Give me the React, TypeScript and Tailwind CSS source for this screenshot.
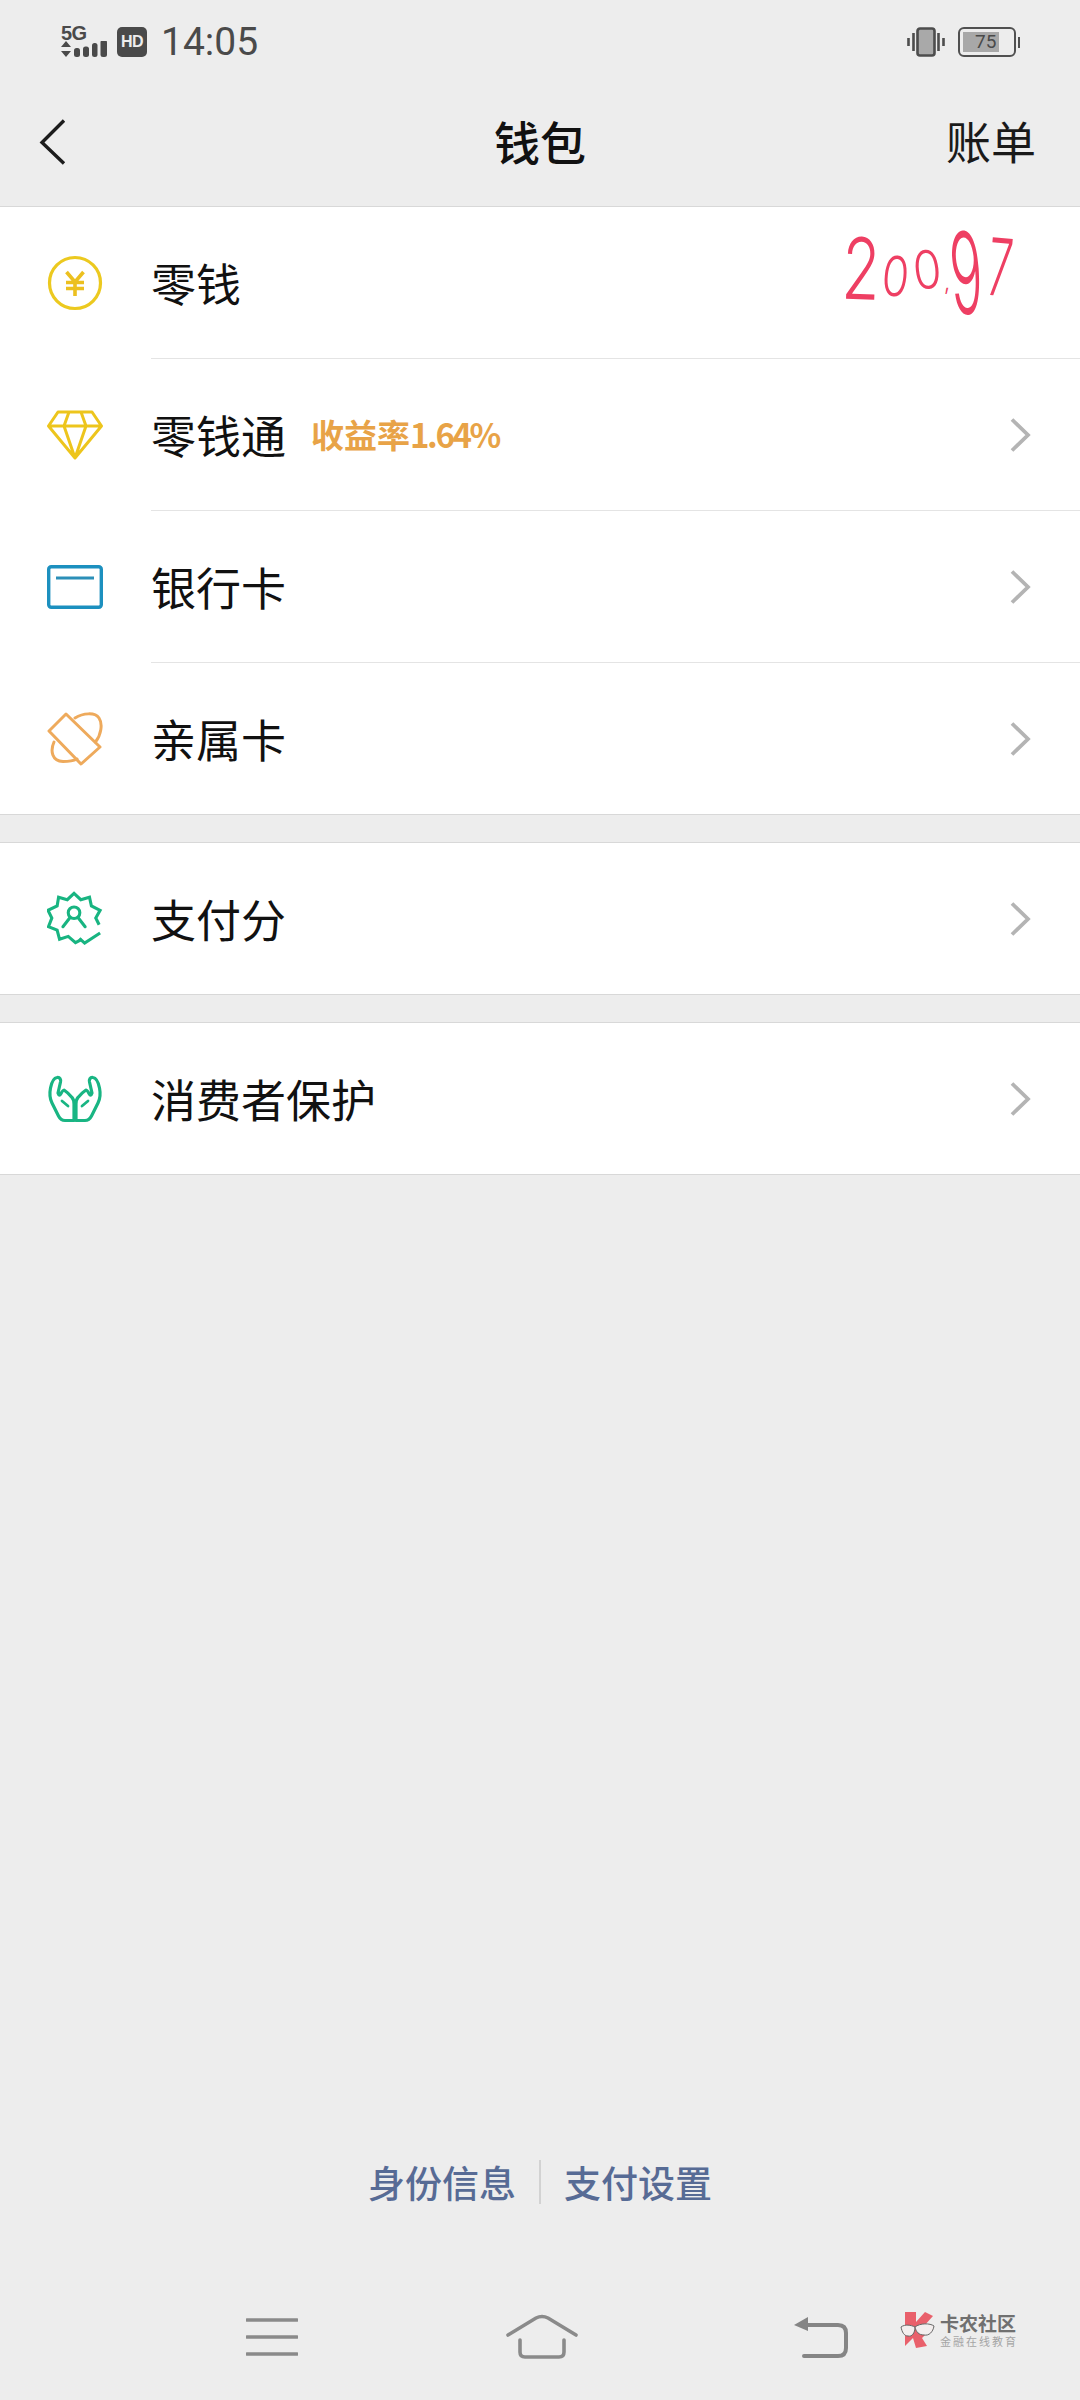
import React from "react";

const CJK = "font-['Noto_Sans_CJK_SC','Noto_Sans',sans-serif]";

function Chevron() {
  return (
    <svg width="24" height="36" viewBox="0 0 24 36" className="shrink-0" fill="none">
      <path d="M3 2.5 L19 18 L3 33.5" stroke="#b4b4b4" strokeWidth="3.8" />
    </svg>
  );
}

function Coin() {
  return (
    <svg width="56" height="56" viewBox="0 0 56 56" fill="none">
      <circle cx="28" cy="28" r="25.5" stroke="#ecc91f" strokeWidth="3.2" />
      <path d="M19.5 17 L28 27 L36.5 17 M19 27.5 H37 M19 33.5 H37 M28 27 V41" stroke="#ecc01f" strokeWidth="3.6" />
    </svg>
  );
}

function Diamond() {
  return (
    <svg width="56" height="50" viewBox="0 0 56 50" fill="none">
      <path d="M11 2 H45 L54.5 16 L28 48 L1.5 16 Z M1.5 16 H54.5 M22 2 L17 16 L28 48 L39 16 L34 2" stroke="#edc51c" strokeWidth="3" strokeLinejoin="round" />
    </svg>
  );
}

function BankCard() {
  return (
    <svg width="56" height="44" viewBox="0 0 56 44" fill="none">
      <rect x="1.7" y="1.7" width="52.6" height="40.6" rx="2.5" stroke="#1c90bf" strokeWidth="3.4" />
      <path d="M9 13 H47" stroke="#2b8fb8" strokeWidth="3.2" />
    </svg>
  );
}

function FamilyCard() {
  return (
    <svg width="56" height="56" viewBox="0 0 56 56" fill="none">
      <path d="M19 3 L53 36 L34 53 L2 20 Z" stroke="#eeaa5c" strokeWidth="3" strokeLinejoin="round" />
      <path d="M28 7 C36 2 48 1 52 7 C56 13 54 24 48.5 31 M7 31 C3 40 5 50 16 50.5 C21 50.5 26 50 30 48" stroke="#eeaa5c" strokeWidth="3" strokeLinecap="round" />
    </svg>
  );
}

function ScoreBadge() {
  return (
    <svg width="58" height="56" viewBox="0 0 58 56" fill="none">
      <path d="M36 49 L29.5 52.5 L22 46 L13 49 L10.5 39.5 L1.5 36 L5 27 L1 19 L10.5 14.5 L12 5.5 L21 8 L28 1.5 L35 8 L44 5.5 L46 14.5 L55 19 L50.5 27 L54 34" stroke="#18b481" strokeWidth="3.2" strokeLinejoin="miter" />
      <path d="M33.5 48 L39 53 L55 42.5" stroke="#18b481" strokeWidth="3.2" />
      <circle cx="28" cy="21.5" r="6" stroke="#18b481" strokeWidth="3.2" />
      <path d="M23.5 27 L16.5 36 M32.5 27 L39.5 36" stroke="#18b481" strokeWidth="3.2" strokeLinecap="round" />
    </svg>
  );
}

function Hands() {
  return (
    <svg width="56" height="48" viewBox="0 0 56 48" fill="none">
      <path d="M27 45.5 H18 C15 45.5 13 44 11.5 41 L5 28 C3 24 2.5 18 3.5 13 C4.5 8 6.5 3 10 2.5 C13 2 14 4.5 13.5 7 L11 18 L12 20 C13.5 21 15 15 17 15 C20 17 23 20 25 22.5 C26.5 24 27 26 27 29 Z" stroke="#19b583" strokeWidth="3.2" strokeLinejoin="round" />
      <path d="M29 45.5 H38 C41 45.5 43 44 44.5 41 L51 28 C53 24 53.5 18 52.5 13 C51.5 8 49.5 3 46 2.5 C43 2 42 4.5 42.5 7 L45 18 L44 20 C42.5 21 41 15 39 15 C36 17 33 20 31 22.5 C29.5 24 29 26 29 29 Z" stroke="#19b583" strokeWidth="3.2" strokeLinejoin="round" />
      <path d="M15 26 L21 31 M41 26 L35 31" stroke="#19b583" strokeWidth="2.8" strokeLinecap="round" />
    </svg>
  );
}

function Row({
  icon,
  label,
  extra,
  chevron = true,
  divider = false,
  short = false,
}: {
  icon: React.ReactNode;
  label: string;
  extra?: React.ReactNode;
  chevron?: boolean;
  divider?: boolean;
  short?: boolean;
}) {
  return (
    <div className={`flex items-stretch ${short ? "h-[151px]" : "h-[152px]"}`}>
      <div className="flex w-[151px] shrink-0 items-center pl-[47px]">
        <div className="flex w-[56px] items-center justify-center">{icon}</div>
      </div>
      <div className={`flex flex-1 items-center pr-[47px] ${divider ? "border-b border-[#e4e4e4]" : ""}`}>
        <span className="text-[45px] leading-none text-[#111111]">{label}</span>
        {extra}
        <div className="flex-1" />
        {chevron && <Chevron />}
      </div>
    </div>
  );
}

function Signal() {
  return (
    <div className="flex flex-col">
      <span className="font-['Liberation_Sans',sans-serif] text-[20px] font-bold leading-[15px] tracking-[-0.5px] text-[#4a4a4a]">5G</span>
      <svg width="47" height="17" viewBox="0 0 47 17">
        <path d="M0 6 L5 0 L10 6 Z M0 10 H10 L5 16 Z" fill="#4a4a4a" />
        <rect x="13" y="7" width="6" height="9" rx="2.5" fill="#4a4a4a" />
        <rect x="22" y="5.5" width="6" height="10.5" rx="2.5" fill="#4a4a4a" />
        <rect x="31" y="2" width="5.5" height="14" rx="2.5" fill="#4a4a4a" />
        <rect x="39.5" y="-1" width="6.5" height="17" rx="2.5" fill="#4a4a4a" />
      </svg>
    </div>
  );
}

function Vibrate() {
  return (
    <svg width="38" height="30" viewBox="0 0 38 30" fill="none">
      <rect x="10.5" y="1.5" width="17" height="27" rx="2.5" stroke="#4d4d4d" strokeWidth="2.6" fill="#a9a9a9" />
      <path d="M6.5 6 V24 M31.5 6 V24" stroke="#4d4d4d" strokeWidth="2.6" />
      <path d="M1.5 11 V19 M36.5 11 V19" stroke="#4d4d4d" strokeWidth="2.6" />
    </svg>
  );
}

function Battery() {
  return (
    <div className="flex items-center gap-[2px]">
      <div className="relative flex h-[30px] w-[58px] items-center rounded-[6px] border-[2px] border-[#505050] p-[3px]">
        <div className="h-full w-[36px] bg-[#a8a8a8]" />
        <span className="absolute left-[15px] top-[1px] font-['Roboto',sans-serif] text-[19px] leading-[24px] text-[#4a4a4a]">75</span>
      </div>
      <div className="h-[11px] w-[2px] bg-[#505050]" />
    </div>
  );
}

function Handwriting() {
  const chars: [string, string][] = [
    ["2", "text-[62px] mt-[18px] mr-[2px] scale-y-[1.37] rotate-[2deg]"],
    ["0", "text-[44px] mt-[34px] mr-[4px] scale-y-[1.25] rotate-[6deg]"],
    ["0", "text-[46px] mt-[26px] mr-[2px] scale-y-[1.15] rotate-[-6deg]"],
    [",", "text-[24px] mt-[50px]"],
    ["9", "text-[54px] mt-[27px] mr-[5px] scale-y-[2.1] rotate-[-4deg]"],
    ["7", "text-[44px] mt-[25px] scale-y-[1.8] rotate-[5deg]"],
  ];
  return (
    <div className="absolute left-[842px] top-[220px] flex items-start font-['Inter',sans-serif] font-light leading-none text-[#ee3f63]">
      {chars.map(([c, cls], i) => (
        <span key={i} className={`inline-block leading-none ${cls}`}>{c}</span>
      ))}
    </div>
  );
}

function Watermark() {
  return (
    <div className="absolute left-[900px] top-[2312px] flex items-center gap-[2px]">
      <svg width="38" height="36" viewBox="0 0 38 36" fill="none">
        <path d="M5 0 H16 V10 L25 0 L33 4 L24 14 L28 20 L22 26 L27 34 L16 36 L13 26 L5 34 Z" fill="#e9606b" />
        <path d="M1 15 C5 12 11 13 15 15 C15 21 12 25 8 24 C4 24 2 20 1 15 Z" fill="#f3eeee" stroke="#666" strokeWidth="1" />
        <path d="M15 15 C20 11 30 11 34 14 C33 20 29 24 24 23 C19 23 16 20 15 15 Z" fill="#f3eeee" stroke="#666" strokeWidth="1" />
      </svg>
      <div className="flex flex-col">
        <span className="text-[19px] font-bold leading-[22px] text-[#707070]">卡农社区</span>
        <span className="text-[11px] leading-[14px] tracking-[2px] text-[#a5a5a5]">金融在线教育</span>
      </div>
    </div>
  );
}

export default function App() {
  return (
    <div className={`relative flex h-[2400px] w-[1080px] flex-col overflow-hidden bg-[#ededed] ${CJK}`}>
      {/* status bar */}
      <div className="flex h-[84px] items-center pl-[61px] pr-[60px]">
        <Signal />
        <div className="ml-[9px] flex h-[30px] w-[30px] items-center justify-center rounded-[5px] bg-[#4a4a4a] font-['Liberation_Sans',sans-serif] text-[16px] font-bold tracking-[-0.5px] text-[#ededed]">
          HD
        </div>
        <span className="ml-[14px] font-['Roboto',sans-serif] text-[39px] leading-none text-[#4a4a4a]">14:05</span>
        <div className="flex-1" />
        <Vibrate />
        <div className="ml-[13px]"><Battery /></div>
      </div>

      {/* title bar */}
      <div className="relative flex h-[123px] items-center justify-center border-b border-[#d8d8d8] pb-[10px]">
        <svg width="28" height="48" viewBox="0 0 28 48" fill="none" className="absolute left-[39px] top-[34px]">
          <path d="M25 2.5 L3 24.5 L25 45.5" stroke="#1c1c1c" strokeWidth="3.4" />
        </svg>
        <span className="text-[46px] font-medium leading-none text-[#111111]">钱包</span>
        <span className="absolute right-[44px] top-[34px] text-[45px] leading-none text-[#1a1a1a]">账单</span>
      </div>

      {/* wallet list */}
      <div className="border-b border-[#d8d8d8] bg-white">
        <Row icon={<Coin />} label="零钱" chevron={false} divider />
        <Row
          icon={<Diamond />}
          label="零钱通"
          divider
          extra={
            <span className="ml-[25px] text-[33px] font-bold leading-none text-[#e8a347]">
              收益率<span className="tracking-[-2.4px]">1.64%</span>
            </span>
          }
        />
        <Row icon={<BankCard />} label="银行卡" divider />
        <Row icon={<FamilyCard />} label="亲属卡" short />
      </div>

      <div className="mt-[27px] border-y border-[#d8d8d8] bg-white">
        <Row icon={<ScoreBadge />} label="支付分" short />
      </div>

      <div className="mt-[27px] border-y border-[#d8d8d8] bg-white">
        <Row icon={<Hands />} label="消费者保护" short />
      </div>

      <div className="flex-1" />

      {/* footer links */}
      <div className="flex h-[44px] items-center justify-center">
        <span className="text-[37px] font-medium leading-none text-[#576b95]">身份信息</span>
        <div className="mx-[23px] h-[44px] w-[2px] bg-[#d2d2d2]" />
        <span className="text-[37px] font-medium leading-none text-[#576b95]">支付设置</span>
      </div>

      {/* nav bar */}
      <div className="mt-[100px] flex h-[96px] items-start">
        <svg width="52" height="42" viewBox="0 0 52 42" fill="none" className="ml-[246px] mt-[14px]">
          <path d="M1 2 H51 M1 19 H51 M1 36 H51" stroke="#8a8a8a" strokeWidth="3.6" strokeLinecap="round" />
        </svg>
        <svg width="72" height="46" viewBox="0 0 72 46" fill="none" className="ml-[208px] mt-[10px]">
          <path d="M2 21 L30 4 Q36 1 42 4 L70 21" stroke="#8a8a8a" strokeWidth="3.6" strokeLinecap="round" />
          <path d="M14 26 V38 Q14 43 19 43 H53 Q58 43 58 38 V26" stroke="#8a8a8a" strokeWidth="3.6" strokeLinecap="round" />
        </svg>
        <svg width="54" height="44" viewBox="0 0 54 44" fill="none" className="ml-[216px] mt-[12px]">
          <path d="M14 9 H44 Q52 9 52 17 V32 Q52 40 44 40 H10" stroke="#858585" strokeWidth="4" strokeLinecap="round" />
          <path d="M0 9 L14 1 V15 Z" fill="#858585" />
        </svg>
      </div>

      <Handwriting />
      <Watermark />
    </div>
  );
}
